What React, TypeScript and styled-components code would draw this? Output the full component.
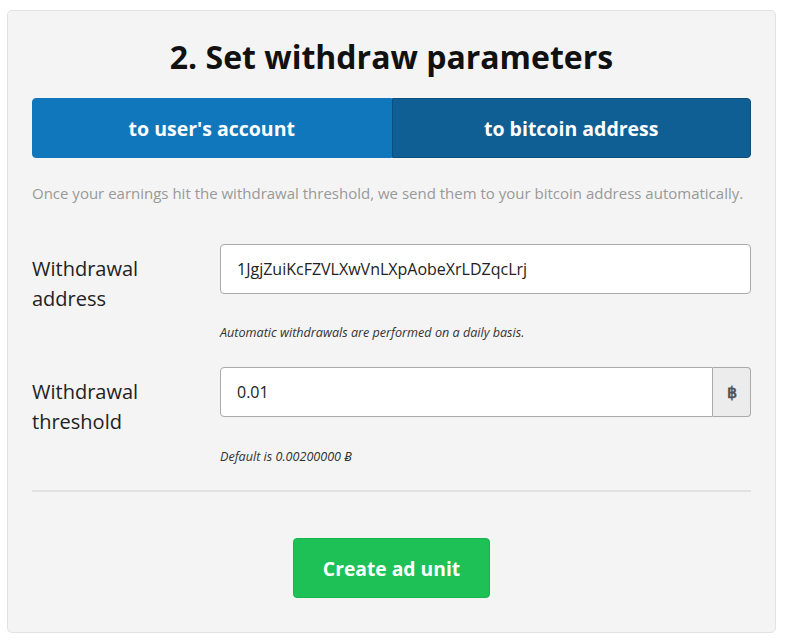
import styled, { createGlobalStyle } from 'styled-components'

const GlobalStyle = createGlobalStyle`
  body {
    margin: 0;
    background: #ffffff;
    font-family: "Open Sans", "Noto Sans", sans-serif;
  }
`

const Panel = styled.div`
  box-sizing: border-box;
  width: 769px;
  margin: 10px 0 0 7px;
  padding: 24px 24px 34px;
  background: #f4f4f4;
  border: 1px solid #e2e2e2;
  border-radius: 5px;
`

const Title = styled.h2`
  margin: 0;
  font-size: 32px;
  line-height: 44px;
  font-weight: 700;
  color: #111;
  text-align: center;
`

const Tabs = styled.div`
  display: flex;
  margin-top: 19px;
  height: 60px;
`

const Tab = styled.button<{ $active?: boolean }>`
  flex: 1;
  border: 1px solid ${({ $active }) => ($active ? '#0c4f7e' : '#1177bb')};
  background: ${({ $active }) => ($active ? '#0f5e94' : '#1177bd')};
  color: #fff;
  font-family: inherit;
  font-size: 19.5px;
  font-weight: 700;
  cursor: pointer;
  &:first-child {
    border-radius: 4px 0 0 4px;
  }
  &:last-child {
    border-radius: 0 4px 4px 0;
  }
`

const Description = styled.p`
  margin: 24px 0 0;
  font-size: 15px;
  line-height: 22px;
  color: #999;
`

const Row = styled.div<{ $gap: number }>`
  display: flex;
  margin-top: ${({ $gap }) => $gap}px;
`

const Label = styled.label`
  width: 188px;
  flex-shrink: 0;
  padding-top: 10px;
  font-size: 20px;
  line-height: 30px;
  color: #222;
`

const Field = styled.div`
  flex: 1;
`

const InputGroup = styled.div`
  display: flex;
  height: 50px;
`

const Input = styled.input<{ $addon?: boolean }>`
  flex: 1;
  min-width: 0;
  box-sizing: border-box;
  height: 50px;
  padding: 0 16px;
  border: 1px solid #aaa;
  border-radius: ${({ $addon }) => ($addon ? '4px 0 0 4px' : '4px')};
  background: #fff;
  font-family: inherit;
  font-size: 16px;
  color: #222;
  outline: none;
`

const Addon = styled.span`
  display: flex;
  align-items: center;
  justify-content: center;
  width: 37px;
  border: 1px solid #aaa;
  border-left: none;
  border-radius: 0 4px 4px 0;
  background: #ececec;
  font-size: 16px;
  font-weight: 700;
  color: #555;
`

const Hint = styled.div<{ $gap: number }>`
  margin-top: ${({ $gap }) => $gap}px;
  font-size: 12.6px;
  line-height: 18px;
  font-style: italic;
  color: #333;
`

const Divider = styled.hr`
  margin: 24px 0 0;
  border: none;
  border-top: 2px solid #e2e2e2;
`

const Footer = styled.div`
  display: flex;
  justify-content: center;
  margin-top: 46px;
`

const SubmitButton = styled.button`
  width: 197px;
  height: 60px;
  border: 1px solid #17b54d;
  border-radius: 4px;
  background: #1dc156;
  color: #fff;
  font-family: inherit;
  font-size: 19.3px;
  font-weight: 700;
  cursor: pointer;
`

export default function App() {
  return (
    <>
      <GlobalStyle />
      <Panel>
        <Title>2. Set withdraw parameters</Title>
        <Tabs>
          <Tab>to user's account</Tab>
          <Tab $active>to bitcoin address</Tab>
        </Tabs>
        <Description>
          Once your earnings hit the withdrawal threshold, we send them to your bitcoin address automatically.
        </Description>

        <Row $gap={40}>
          <Label>
            Withdrawal
            <br />
            address
          </Label>
          <Field>
            <InputGroup>
              <Input defaultValue="1JgjZuiKcFZVLXwVnLXpAobeXrLDZqcLrj" />
            </InputGroup>
            <Hint $gap={30}>Automatic withdrawals are performed on a daily basis.</Hint>
          </Field>
        </Row>

        <Row $gap={25}>
          <Label>
            Withdrawal
            <br />
            threshold
          </Label>
          <Field>
            <InputGroup>
              <Input $addon defaultValue="0.01" />
              <Addon>฿</Addon>
            </InputGroup>
            <Hint $gap={31}>Default is 0.00200000 Ƀ</Hint>
          </Field>
        </Row>

        <Divider />
        <Footer>
          <SubmitButton>Create ad unit</SubmitButton>
        </Footer>
      </Panel>
    </>
  )
}
